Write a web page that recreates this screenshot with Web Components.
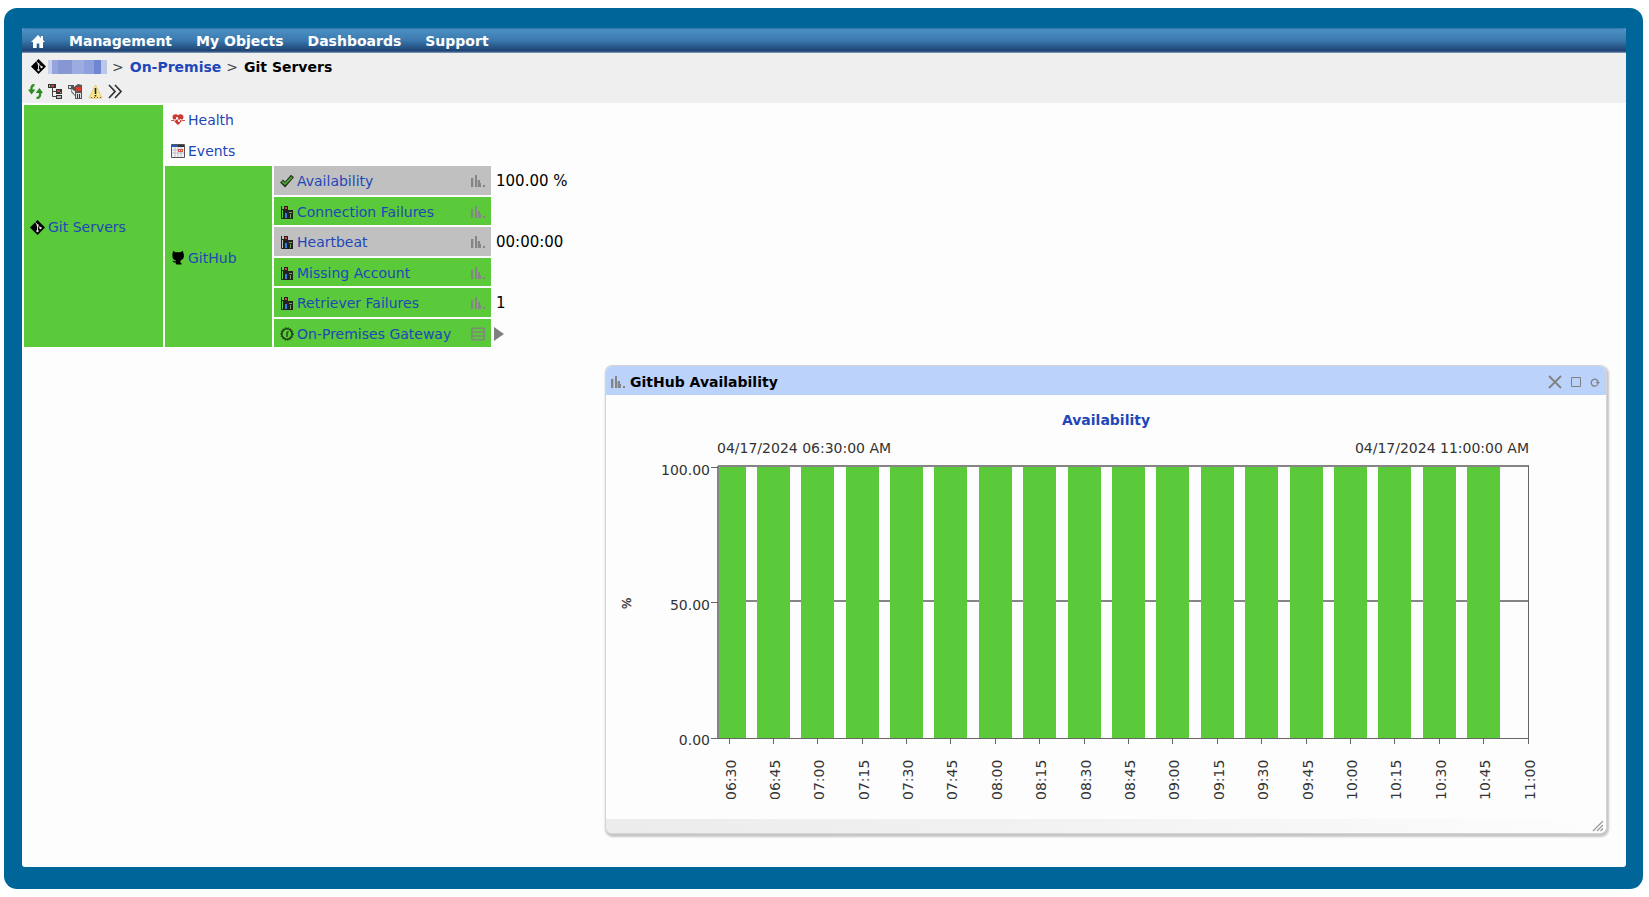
<!DOCTYPE html>
<html lang="en">
<head>
<meta charset="utf-8">
<title>Git Servers</title>
<style>
  html { background: #fff; }
  body {
    margin: 0;
    padding: 8px 6px 8px 4px;
    box-sizing: border-box;
    min-height: 100vh;
    display: flex;
    font: 14px/20px "DejaVu Sans", Verdana, sans-serif;
    color: #000;
    --link: #1f47b8;
    --green: #5ac93a;
    --silver: #c0c0c0;
  }
</style>
</head>
<body>
<app-frame>
  <nav-bar slot="top"></nav-bar>
  <bread-crumbs slot="top"></bread-crumbs>
  <status-table></status-table>
  <float-window heading="GitHub Availability"><availability-chart></availability-chart></float-window>
</app-frame>

<script>
const ICONS = {
  home: [14, '<path fill="#fff" d="M7 1 0 8h2v6h3.700V9.500h2.600V14H12V8h2l-2-2V2h-2v2z"/>'],
  git: [15, '<path fill="#000" d="M7.500 0 15 7.500 7.500 15 0 7.500z"/><path d="M5.500 2.500 7.500 5v6M7.500 5l3 3" stroke="#ddd" stroke-width="1" fill="none"/><circle cx="7.500" cy="5" r="1" fill="#ddd"/><circle cx="7.500" cy="11" r="1.200" fill="#ddd"/><circle cx="10.500" cy="8" r="1.200" fill="#ddd"/>'],
  refresh: [15, '<path fill="none" stroke="#2f8a24" stroke-width="2.400" d="M6.500 1C4 1 3 3 3.500 7M8.500 14c3 0 4-2 3.500-6"/><path fill="#2f8a24" d="M0 5.500h7.500L3.500 10.500zM7.500 9H15L11.500 4z"/>'],
  tree: [15, '<path fill="none" stroke="#444" d="M4.500 3v9.500H9M4.500 7.500H9"/><path fill="#333" d="M0 0h8v4H0zM8 5h6v5H8zM8 11h6v4H8z"/><path fill="#e0382c" d="M3 1h3v2H3zM9 6h3v2H9z"/><path fill="#bbb" d="M1 1h1v2H1zM9 12h4v2H9zM12 8h1v1h-1z"/>'],
  graph: [15, '<path fill="#555" d="M0 1h6v4H0zM2 5l5 6V7zM6 3l4-3 4 1v14H7v-3L3 8z"/><path fill="#ddd" d="M1 2h2v2H1zM4 6h1v2H4zM8 9h5v5H8z"/><path fill="#e0382c" d="M8 3h5v4H8z"/><path fill="#334" d="M9 10h1v4H9zM11 10h1v4h-1z"/>'],
  warn: [15, '<path fill="#f7ea90" stroke="#e0cc70" d="M7.500 1 14 14H1z"/><path stroke="#222" stroke-width="1.600" d="M7.500 4v6M7.500 11v1.500"/><path stroke="#b04a30" stroke-dasharray="1 2" d="M3 13.500h10"/>'],
  more: [15, '<path fill="none" stroke="#333" stroke-width="1.700" d="m1 1 6 6.500L1 14M7 1l6 6.500L7 14"/>'],
  heart: [14, '<path fill="#c93a34" d="M7 2.500C6 .5 1.500.500 1.500 4 1.500 7.500 7 12 7 12s5.500-4.500 5.500-8C12.500.500 8 .5 7 2.500z"/><path fill="none" stroke="#fff" d="M2 7h3l1-3 2 5 1.300-3 .7 1h2"/><path stroke="#d05a56" d="M0 7.500h3M11 7.500h3"/>'],
  calendar: [14, '<path fill="#f4f4f4" stroke="#555" d="M.5.500h13v13H.5z"/><path fill="#2457c0" d="M1 1h6v2H1z"/><path fill="#333" d="M7 1h6v2H7z"/><path fill="none" stroke="#aab" stroke-width=".7" d="M4 3v10M7 3v10M10 3v10M1 6h12M1 9h12"/><path fill="#d8534a" d="M7 5h5v3H7z"/><path fill="#eec" d="M8 6h1v1H8zM10 6h1v1h-1z"/>'],
  octocat: [14, '<path fill="#000" d="M2 0l2.500 1.200h4.500L12 0l.5 2.500c.8 1.500.6 4.500-1 5.700L9.500 9.500V13H5v-1.500C3 12 2.500 11 1 9.500c1.500 0 2 1 4 .8V9.500C2.500 9 1 7 1.500 3z"/><path fill="#000" d="M4.500 12h6v1.500h-5z"/>'],
  check: [14, '<path fill="none" stroke="#1c3314" stroke-width="4" d="m1.500 7 3.500 3.500L12.500 2"/><path fill="none" stroke="#4fa03c" stroke-width="1.800" d="m2 7.500 3 2.500L12 3"/>'],
  metric: [14, '<path fill="none" stroke="#222" d="M1.500 1v12.500H13M1 4.500h3"/><path fill="#222" d="M3 5h2v8H3zM4 1h4v12H4zM8 5h5v8H8z"/><path fill="#3a7be0" d="M5 8h2v5H5z"/><path fill="#d8403a" d="M5 2h2v2H5z"/><path fill="#6aa85a" d="M9 7h3v1H9zM10 9h1v4h-1z"/>'],
  gateway: [14, '<circle cx="7" cy="7" r="5.200" fill="none" stroke="#1e3a16" stroke-width="1.600"/><circle cx="7" cy="7" r="6.300" fill="none" stroke="#1e3a16" stroke-dasharray="1.200 1.500"/><path fill="none" stroke="#1e3a16" stroke-width="1.300" d="M8.500 4.500 7 5.500V10"/>'],
  bars: [14, '<path fill="#858585" d="M0 4h2v9H0zM4 1h2v12H4zM7 6h2v7H7zM9 9h1v4H9zM12 11h2v2h-2z"/><path fill="#999" d="M2 4h1v9H2zM6 6h1v7H6z" opacity=".5"/>'],
  list: [14, '<rect x=".8" y="1.200" width="12.400" height="11.600" rx="1.500" fill="none" stroke="#7d8a7a" stroke-width="1.600"/><path stroke="#7d8a7a" stroke-width="1.600" d="M1 5h12M1 9h12"/>'],
  arrow: [14, '<path fill="#808080" d="M0 0v14l10-7z"/>'],
  close: [14, '<path stroke="#808080" stroke-width="1.800" d="m1 1 12 12M13 1 1 13"/>'],
  max: [10, '<path fill="none" stroke="#808080" d="M.5.500h9v9h-9z"/>'],
  reload: [10, '<path fill="none" stroke="#808080" stroke-width="1.300" d="M7.700 7.500A3.500 3.500 0 1 1 8 4.500V6"/><path fill="#808080" d="M5.500 5H10L8 7.500z"/>'],
  grip: [12, '<path stroke="#999" stroke-width="1.200" d="M1 11 11 1M5 11l6-6M8.500 11 11 8.500"/>']
};

function define(name, render) {
  customElements.define(name, class extends HTMLElement {
    connectedCallback() {
      if (this.shadowRoot) return;
      this.attachShadow({ mode: 'open' }).innerHTML = render(this);
    }
  });
}

define('ui-icon', el => {
  const [size, body] = ICONS[el.getAttribute('name')];
  return `<style>:host{display:block;flex:none}svg{display:block}</style>
    <svg width="${size}" height="${size}" viewBox="0 0 ${size} ${size}" aria-hidden="true">${body}</svg>`;
});

define('app-frame', () => `
  <style>
    :host{flex:1;display:flex;background:#069;border-radius:13px;padding:20px 17px 22px 18px;box-sizing:border-box}
    .page{flex:1;min-width:0;display:flex;flex-direction:column;background:#fdfdfd;border-radius:3px;overflow:hidden}
    main{flex:1;position:relative;min-height:760px}
  </style>
  <div class="page"><slot name="top"></slot><main><slot></slot></main></div>`);

define('nav-bar', () => `
  <style>
    :host{display:block;background:linear-gradient(#3374a8,#4a8fc3 2px,#3a78ad 50%,#1d4273 23px,#8ea3c0 25px)}
    nav{display:flex;align-items:center;gap:24px;height:25px;padding:0 9px}
    a{color:#fff;font-weight:700;text-decoration:none;white-space:nowrap}
  </style>
  <nav><a href="#home" aria-label="Home"><ui-icon name="home"></ui-icon></a><a href="#management">Management</a><a href="#objects">My Objects</a><a href="#dashboards">Dashboards</a><a href="#support">Support</a></nav>`);

define('bread-crumbs', () => `
  <style>
    :host{display:block;height:50px;background:#efefef}
    .trail{display:flex;align-items:center;height:27px;padding-left:9px;gap:6px;font-weight:700}
    .trail i{font-style:normal;font-weight:400;color:#444;margin-left:-1px}
    a{color:var(--link);text-decoration:none}
    .hidden{width:59px;height:14px;margin-left:-4px;background:linear-gradient(90deg,#c8d0ea 4px,#95a5db 4px 10px,#8797d4 10px 24px,#9dace0 24px 36px,#8ea0dc 36px 46px,#6f87d3 46px 53px,#bcc7e8 53px)}
    .tools{display:flex;gap:5px;padding:4px 6px}
    button{border:0;padding:0;background:none;display:block}
  </style>
  <div class="trail"><ui-icon name="git"></ui-icon><a class="hidden" href="#root" aria-label="Account"></a><i>&gt;</i><a href="#on-premise">On-Premise</a><i>&gt;</i><span>Git Servers</span></div>
  <div class="tools">${[['refresh', 'Refresh'], ['tree', 'Tree'], ['graph', 'Graph'], ['warn', 'Alerts'], ['more', 'More']]
    .map(([n, l]) => `<button aria-label="${l}"><ui-icon name="${n}"></ui-icon></button>`).join('')}</div>`);

const METRICS = [
  ['check', 'Availability', '100.00 %', 'idle'],
  ['metric', 'Connection Failures', '', 'ok'],
  ['metric', 'Heartbeat', '00:00:00', 'idle'],
  ['metric', 'Missing Account', '', 'ok'],
  ['metric', 'Retriever Failures', '1', 'ok'],
  ['gateway', 'On-Premises Gateway', null, 'ok']
];
const label = (icon, text) => `<div class="label"><ui-icon name="${icon}"></ui-icon><a href="#${text.toLowerCase().replace(/ /g, '-')}">${text}</a></div>`;
const metricCells = ([icon, text, value, state]) => `
  <td class="${state}"><div class="metric">${label(icon, text)}<ui-icon name="${value === null ? 'list' : 'bars'}"></ui-icon></div></td>
  <td class="value">${value === null ? '<ui-icon name="arrow"></ui-icon>' : value}</td>`;

define('status-table', () => `
  <style>
    :host{display:block}
    table{border-collapse:separate;border-spacing:2px;height:246px}
    td{padding:2px 6px 0;box-sizing:border-box;white-space:nowrap}
    .c1{width:139px}.c2{width:107px}.c3{width:217px}
    .ok{background:var(--green)}
    .idle{background:var(--silver)}
    .label,.metric{display:flex;align-items:center;gap:3px}
    .metric{justify-content:space-between}
    .value{padding:2px 3px 0;font-size:15px}
    .value ui-icon{margin-left:-2px}
    a{color:var(--link);text-decoration:none}
  </style>
  <table>
    <colgroup><col class="c1"><col class="c2"><col class="c3"><col></colgroup>
    <tr><td class="ok c1" rowspan="8">${label('git', 'Git Servers')}</td><td class="c2">${label('heart', 'Health')}</td></tr>
    <tr><td>${label('calendar', 'Events')}</td></tr>
    <tr><td class="ok" rowspan="6">${label('octocat', 'GitHub')}</td>${metricCells(METRICS[0])}</tr>
    ${METRICS.slice(1).map(m => `<tr>${metricCells(m)}</tr>`).join('')}
  </table>`);

define('float-window', el => `
  <style>
    :host{position:absolute;top:263px;left:584px;right:20px;background:#fdfdfd;border-radius:6px;box-shadow:0 0 0 1px #d4d4d4,1px 2px 2px 2px #c6c6c6}
    header{display:flex;align-items:center;gap:5px;height:29px;padding:2px 6px 0 5px;box-sizing:border-box;background:#bbd2fb;border-radius:6px 6px 0 0}
    h2{flex:1;margin:0;font:inherit;font-weight:700}
    .controls{display:flex;align-items:center;gap:9px}
    button{border:0;padding:0;background:none;display:block}
    footer{display:flex;justify-content:flex-end;align-items:center;height:14px;padding-right:2px;background:linear-gradient(90deg,#ececec,#f1f1f1 40%,#fdfdfd);border-radius:0 0 6px 6px}
  </style>
  <header><ui-icon name="bars"></ui-icon><h2>${el.getAttribute('heading')}</h2>
    <div class="controls"><button aria-label="Close"><ui-icon name="close"></ui-icon></button><button aria-label="Maximize"><ui-icon name="max"></ui-icon></button><button aria-label="Reload"><ui-icon name="reload"></ui-icon></button></div></header>
  <slot></slot>
  <footer><ui-icon name="grip"></ui-icon></footer>`);

define('availability-chart', () => {
  const left = 112, right = 922, top = 71, bottom = 343, first = 123, count = 18;
  const rect = (x, y, w, h, c) => `<rect x="${x}" y="${y}" width="${w}" height="${h}" class="${c}"/>`;
  let bars = '', ticks = '';
  for (let i = 0; i <= count; i++) {
    const x = Math.floor(first + i * (right - first) / count);
    const minutes = 390 + i * 15;
    const time = [Math.floor(minutes / 60), minutes % 60].map(n => String(n).padStart(2, '0')).join(':');
    if (i < count) {
      const from = Math.max(left + 1, x - 16);
      bars += rect(from, top + 1, x + 17 - from, bottom - top - 1, 'bar');
    }
    ticks += rect(x, bottom, 1, 6, 'tick') + `<text transform="translate(${x + 7} 405) rotate(-90)">${time}</text>`;
  }
  const levels = [['100.00', 72, 80], ['50.00', 207, 215], ['0.00', 343, 350]]
    .map(([t, y, base]) => rect(105, y, 7, 1, 'tick') + `<text x="104" y="${base}" text-anchor="end">${t}</text>`).join('');
  return `
  <style>
    :host{display:block}
    svg{display:block;width:100%;height:auto}
    text{font-size:14px;fill:#333}
    .title{font-weight:700;fill:var(--link)}
    .unit{font-size:12px;stroke:#333;stroke-width:.3px}
    .axis{fill:#858585}.edge,.tick{fill:#666}.bar{fill:var(--green)}
  </style>
  <svg viewBox="0 0 1000 424" role="img" aria-label="Availability">
    <a href="#availability"><text class="title" x="500" y="30" text-anchor="middle">Availability</text></a>
    <text x="111" y="58">04/17/2024 06:30:00 AM</text>
    <text x="923" y="58" text-anchor="end">04/17/2024 11:00:00 AM</text>
    <text class="unit" transform="translate(25 214) rotate(-90)">%</text>
    ${rect(left, 205, right - left, 2, 'axis')}
    ${bars}
    ${rect(left, top - 1, right - left + 1, 2, 'axis')}
    ${rect(left - 1, top, 2, bottom - top, 'axis')}
    ${rect(right, top, 1, bottom - top, 'edge')}
    ${rect(left, bottom, right - left + 1, 1, 'edge')}
    ${levels}${ticks}
  </svg>`;
});
</script>
</body>
</html>
